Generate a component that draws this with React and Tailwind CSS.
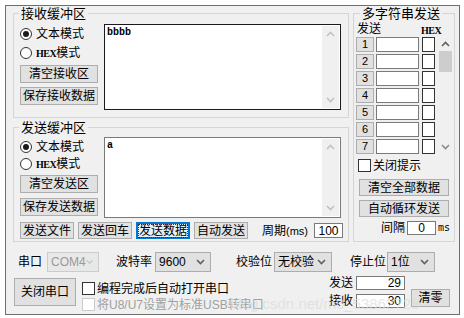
import React from 'react';

const Btn = ({ className = '', children }) => (
  <div className={`flex items-center justify-center border border-[#adadad] bg-[#e1e1e1] leading-none text-black ${className}`}>
    {children}
  </div>
);

const Radio = ({ checked, children, className = '' }) => (
  <div className={`flex items-center gap-[4px] ${className}`}>
    <span className="flex h-[12px] w-[12px] items-center justify-center rounded-full border border-[#333333] bg-white">
      {checked && <span className="h-[6px] w-[6px] rounded-full bg-[#1a1a1a]" />}
    </span>
    <span className="text-[12px] leading-none">{children}</span>
  </div>
);

const Check = ({ disabled }) => (
  <span className={`inline-block h-[13px] w-[13px] shrink-0 border bg-white ${disabled ? 'border-[#cccccc]' : 'border-[#333333]'}`} />
);

const Chevron = ({ down, color = '#c2c2c2' }) => (
  <svg width="9" height="6" viewBox="0 0 9 6">
    <path d={down ? 'M1 1 L4.5 4.5 L8 1' : 'M1 5 L4.5 1.5 L8 5'} fill="none" stroke={color} strokeWidth="1.6" />
  </svg>
);

const HexText = () => <span className="font-['Liberation_Serif'] text-[10px] font-bold tracking-[-0.5px]">HEX</span>;

const Area = ({ text, dark, className = '' }) => (
  <div className={`flex w-[237px] border bg-white ${dark ? 'border-[#1a1a1a]' : 'border-[#7a7a7a]'} ${className}`}>
    <div className="flex-1 px-[2px] pt-[3px] font-['Liberation_Mono'] text-[10px] font-bold leading-none">{text}</div>
    <div className="my-[1px] mr-[1px] flex w-[17px] flex-col items-center justify-between bg-[#f0f0f0] py-[5px]">
      <Chevron />
      <Chevron down />
    </div>
  </div>
);

const Select = ({ value, disabled, className = '' }) => (
  <div className={`flex h-[20px] items-center justify-between border pl-[3px] pr-[5px] text-[12px] leading-none ${disabled ? 'border-[#cccccc] bg-[#e8e8e8] text-[#9a9a9a]' : 'border-[#adadad] bg-[#e1e1e1] text-black'} ${className}`}>
    <span>{value}</span>
    <Chevron down color={disabled ? '#c6c6c6' : '#606060'} />
  </div>
);

const Legend = ({ children, className = '' }) => (
  <legend className={`px-[2px] text-[13px] leading-[13px] ${className}`}>{children}</legend>
);

export default function App() {
  const rows = [1, 2, 3, 4, 5, 6, 7];
  return (
    <div className="h-[318px] w-[464px] whitespace-nowrap bg-white pl-[5px] pt-[5px] font-['Liberation_Sans','Noto_Sans_CJK_SC',sans-serif] text-black">
      <div className="relative h-[310px] w-[455px] overflow-hidden border border-[#6e6e6e] bg-[#f0f0f0]">
        {/* top section */}
        <div className="flex gap-[4px] pl-[7px] pt-[1px]">
          <div className="flex w-[336px] flex-col">
            <fieldset className="border border-[#d5d5d5]">
              <Legend className="ml-[5px]">接收缓冲区</Legend>
              <div className="flex gap-[6px] pb-[7px] pl-[6px] pt-[4px]">
                <div className="flex w-[78px] flex-col">
                  <Radio checked className="h-[19px]">文本模式</Radio>
                  <Radio className="h-[19px]"><HexText />模式</Radio>
                  <Btn className="mt-[3px] h-[18px] text-[12px]">清空接收区</Btn>
                  <Btn className="mt-[4px] h-[18px] text-[12px]">保存接收数据</Btn>
                </div>
                <Area text="bbbb" dark className="h-[86px]" />
              </div>
            </fieldset>
            <fieldset className="mt-[3px] border border-[#d5d5d5]">
              <Legend className="ml-[5px]">发送缓冲区</Legend>
              <div className="flex gap-[6px] pl-[6px] pt-[3px]">
                <div className="flex w-[78px] flex-col">
                  <Radio checked className="h-[19px]">文本模式</Radio>
                  <Radio className="h-[16px]"><HexText />模式</Radio>
                  <Btn className="mt-[3px] h-[18px] text-[12px]">清空发送区</Btn>
                  <Btn className="mt-[5px] h-[18px] text-[12px]">保存发送数据</Btn>
                </div>
                <Area text="a" className="h-[81px]" />
              </div>
              <div className="flex items-center gap-[4px] pb-[2px] pl-[6px] pt-[4px]">
                <Btn className="h-[17px] w-[54px] text-[12px]">发送文件</Btn>
                <Btn className="h-[17px] w-[54px] text-[12px]">发送回车</Btn>
                <div className="flex h-[17px] w-[54px] items-center justify-center border-2 border-[#0078d7] bg-[#e5f1fb]">
                  <span className="border border-dotted border-[#333333] text-[12px] leading-none">发送数据</span>
                </div>
                <Btn className="h-[17px] w-[54px] text-[12px]">自动发送</Btn>
                <span className="ml-[10px] text-[12px] leading-none">
                  周期<span className="text-[11px]">(ms)</span>
                </span>
                <div className="ml-[2px] flex h-[15px] w-[29px] items-center justify-center border border-[#7a7a7a] bg-white text-[12px] leading-none">100</div>
              </div>
            </fieldset>
          </div>

          <fieldset className="w-[102px] border border-[#d5d5d5]">
            <Legend className="ml-[6px]">多字符串发送</Legend>
            <div className="flex flex-col pl-[2px] pt-[1px]">
              <div className="flex h-[16px] items-center">
                <span className="ml-[1px] text-[12px] leading-none">发送</span>
                <span className="ml-[40px]"><HexText /></span>
              </div>
              <div className="flex">
                <div className="flex flex-col gap-[2px]">
                  {rows.map((n) => (
                    <div key={n} className="flex h-[15px] items-center">
                      <Btn className="h-[15px] w-[18px] font-['Liberation_Sans'] text-[11px]">{n}</Btn>
                      <div className="ml-[2px] h-[15px] w-[43px] border border-[#7a7a7a] bg-white" />
                      <span className="ml-[3px] inline-block h-[15px] w-[13px] border border-[#333333] bg-white" />
                    </div>
                  ))}
                </div>
                <div className="ml-[3px] flex h-[117px] w-[14px] flex-col items-center bg-[#f0f0f0]">
                  <div className="flex h-[14px] items-center"><Chevron color="#606060" /></div>
                  <div className="h-[21px] w-[13px] bg-[#cdcdcd]" />
                  <div className="flex-1" />
                  <div className="flex h-[14px] items-center"><Chevron down color="#8a8a8a" /></div>
                </div>
              </div>
              <div className="mt-[5px] flex items-center gap-[2px] pl-[2px]">
                <Check />
                <span className="text-[12px] leading-none">关闭提示</span>
              </div>
              <Btn className="ml-[3px] mt-[7px] h-[17px] w-[90px] text-[12px]">清空全部数据</Btn>
              <Btn className="ml-[3px] mt-[4px] h-[17px] w-[90px] text-[12px]">自动循环发送</Btn>
              <div className="mb-[3px] mt-[4px] flex items-center">
                <span className="ml-[25px] text-[12px] leading-none">间隔</span>
                <div className="ml-[2px] flex h-[14px] w-[29px] items-center justify-center border border-[#7a7a7a] bg-white text-[12px] leading-none">0</div>
                <span className="ml-[2px] font-['DejaVu_Sans_Mono'] text-[10px] leading-none">ms</span>
              </div>
            </div>
          </fieldset>
        </div>

        {/* bottom section */}
        <div className="mt-[10px] flex h-[20px] items-center text-[12px] leading-none">
          <span className="ml-[12px]">串口</span>
          <Select disabled value="COM4" className="ml-[5px] w-[52px]" />
          <span className="ml-[17px]">波特率</span>
          <Select value="9600" className="ml-[3px] w-[56px]" />
          <span className="ml-[25px]">校验位</span>
          <Select value="无校验" className="ml-[2px] w-[58px]" />
          <span className="ml-[18px]">停止位</span>
          <Select value="1位" className="ml-[1px] w-[48px]" />
        </div>
        <div className="mt-[3px] flex">
          <Btn className="ml-[8px] mt-[3px] h-[28px] w-[62px] text-[12px]">关闭串口</Btn>
          <div className="ml-[6px] flex w-[240px] flex-col">
            <div className="mt-[6px] flex h-[15px] items-center gap-[2px]">
              <Check />
              <span className="text-[12px] leading-none">编程完成后自动打开串口</span>
            </div>
            <div className="mt-[1px] flex h-[15px] items-center gap-[2px] text-[#a0a0a0]">
              <Check disabled />
              <span className="text-[12px] leading-none">将U8/U7设置为标准USB转串口</span>
            </div>
          </div>
          <div className="ml-[7px] flex flex-col gap-[3px]">
            <div className="flex h-[15px] items-center">
              <span className="text-[12px] leading-none">发送</span>
              <div className="ml-[3px] flex h-[14px] w-[49px] items-center justify-end border border-[#7a7a7a] bg-white pr-[3px] text-[12px] leading-none">29</div>
            </div>
            <div className="flex h-[15px] items-center">
              <span className="text-[12px] leading-none">接收</span>
              <div className="ml-[3px] flex h-[14px] w-[49px] items-center justify-end border border-[#7a7a7a] bg-white pr-[3px] text-[12px] leading-none">30</div>
            </div>
          </div>
          <Btn className="ml-[6px] mt-[14px] h-[18px] w-[39px] text-[12px]">清零</Btn>
        </div>

        {/* watermark */}
        <div className="pointer-events-none absolute left-[224px] top-[290px] font-['Liberation_Sans'] text-[15px] leading-none text-[#dcdcdc] opacity-70">
          blog.csdn.net/m0_53862725
        </div>
      </div>
    </div>
  );
}
